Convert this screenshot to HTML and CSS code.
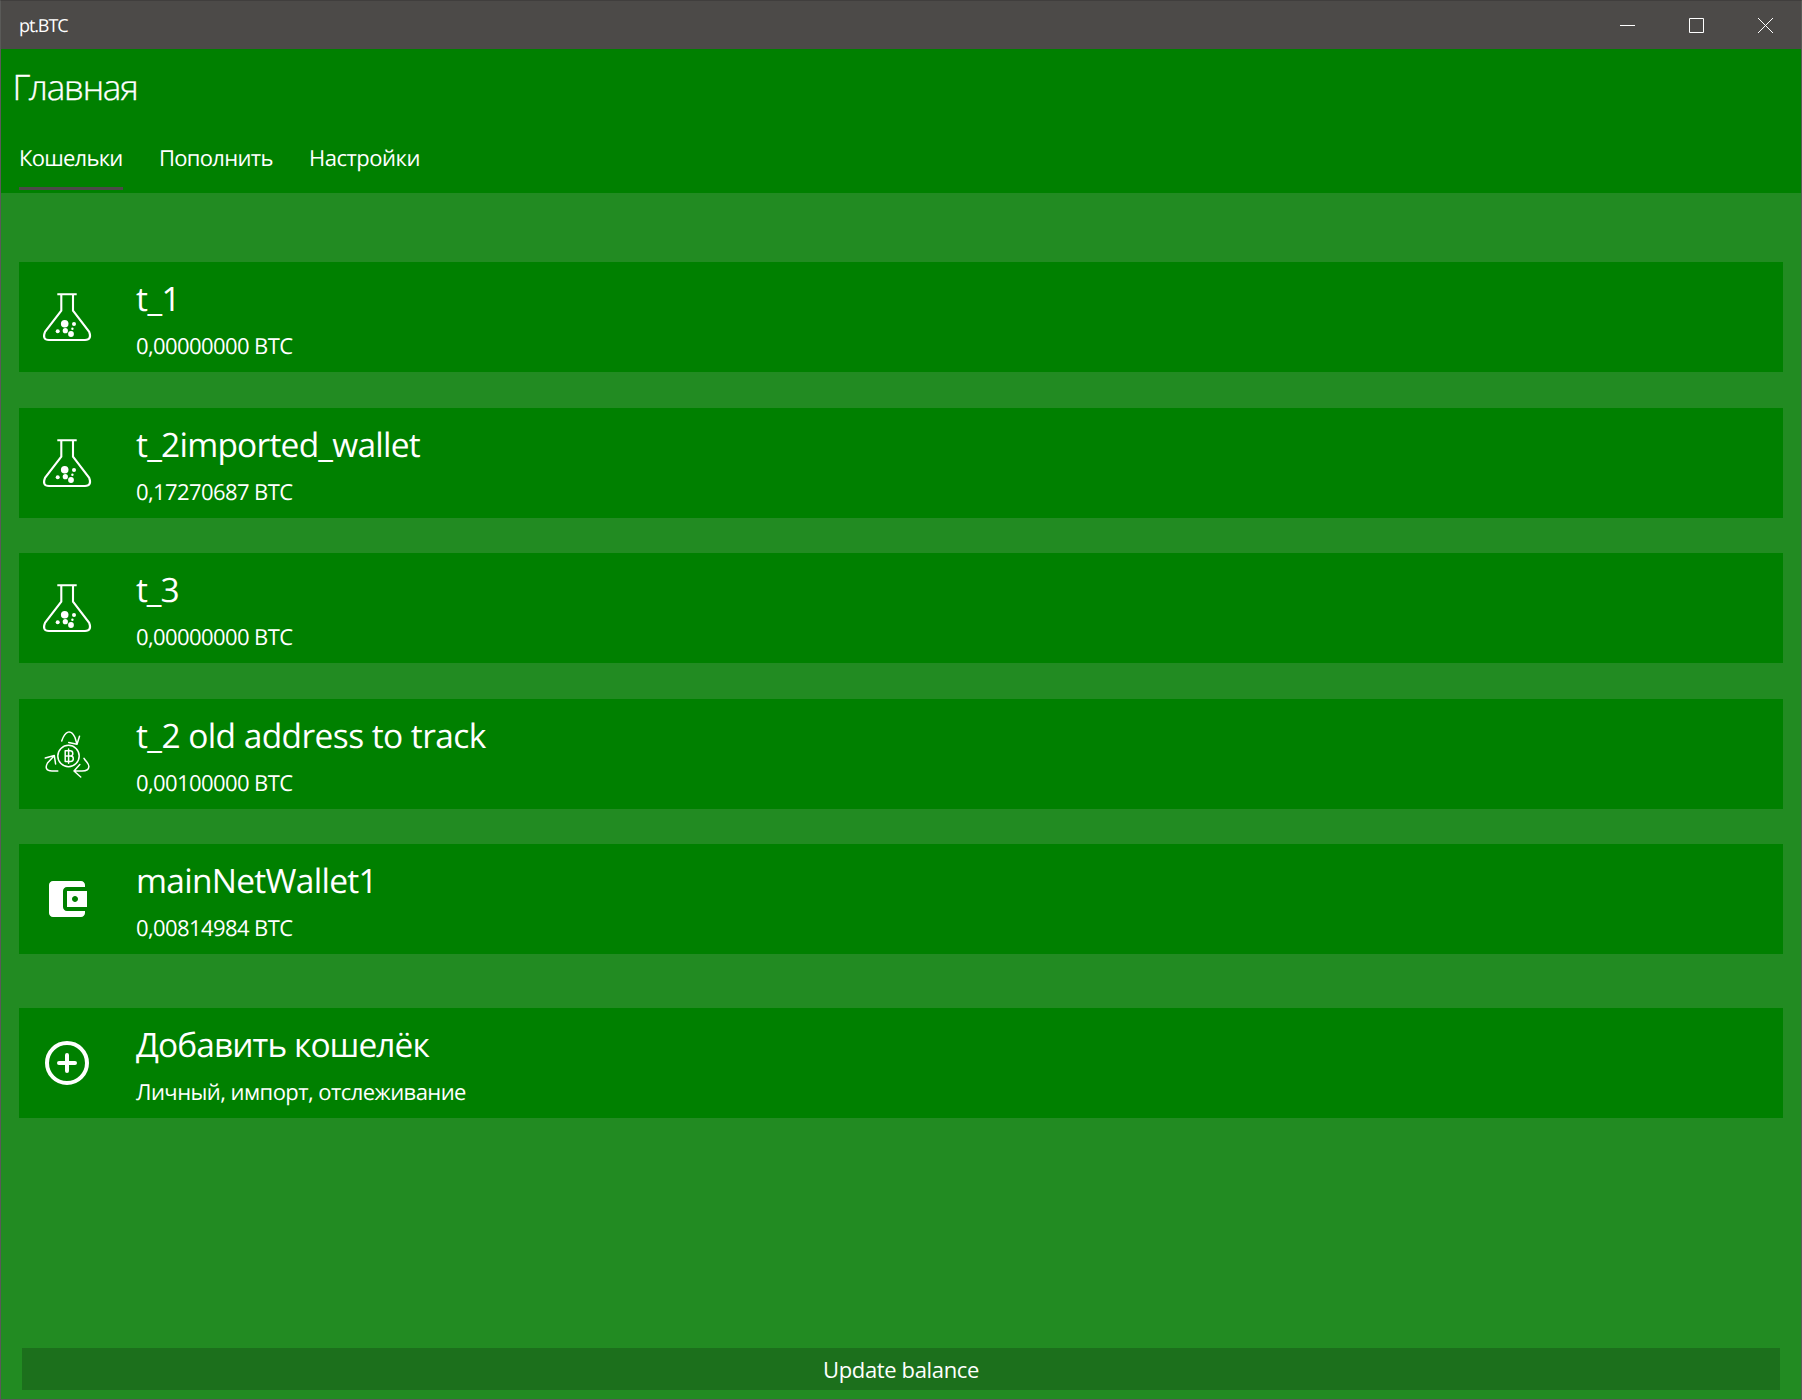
FILE: index.html
```html
<!DOCTYPE html>
<html lang="ru">
<head>
<meta charset="utf-8">
<title>pt.BTC</title>
<link rel="stylesheet" href="styles.css">
</head>
<body>
<svg width="0" height="0" class="defs">
  <symbol id="flask" viewBox="0 0 60 60">
    <path d="M20.3 7.2h19.4M24.3 7.5v16.2L8 44.8Q4.8 52.8 12 53h36q7.2-.2 4.2-8.2L36 23.7V7.5" fill="none" stroke="#fff" stroke-width="2.1"/>
    <g fill="#fff"><circle cx="27.7" cy="36.7" r="3.8"/><circle cx="37" cy="37" r="2"/><circle cx="35.4" cy="41.7" r="1.2"/><circle cx="28.3" cy="43.7" r="2.6"/><circle cx="34" cy="47" r="2.9"/><circle cx="20.7" cy="44.3" r="2"/></g>
  </symbol>
</svg>
<div class="window">
  <header class="titlebar">
    <span class="app-name">pt.BTC</span>
    <div class="controls">
      <svg class="control" viewBox="0 0 69 48"><path d="M27 24.5h15"/></svg>
      <svg class="control" viewBox="0 0 69 48"><path d="M27.500 17.500h14v14h-14z"/></svg>
      <svg class="control" viewBox="0 0 69 48"><path d="M27 17l15 15M42 17L27 32"/></svg>
    </div>
  </header>
  <div class="top">
    <h1 class="title">Главная</h1>
    <nav class="tabs">
      <a class="tab active">Кошельки</a>
      <a class="tab refill">Пополнить</a>
      <a class="tab settings">Настройки</a>
    </nav>
  </div>
  <main class="content">
    <div class="cards">
      <section class="card">
        <svg class="icon"><use href="#flask"/></svg>
        <div class="info"><div class="name short">t_1</div><div class="detail">0,00000000 BTC</div></div>
      </section>
      <section class="card">
        <svg class="icon"><use href="#flask"/></svg>
        <div class="info"><div class="name imported">t_2imported_wallet</div><div class="detail">0,17270687 BTC</div></div>
      </section>
      <section class="card">
        <svg class="icon"><use href="#flask"/></svg>
        <div class="info"><div class="name third">t_3</div><div class="detail">0,00000000 BTC</div></div>
      </section>
      <section class="card">
        <svg class="icon" viewBox="0 0 60 60" fill="none" stroke="#fff" stroke-width="1.5" stroke-linecap="round" stroke-linejoin="round">
          <circle cx="31.5" cy="32" r="10.7"/>
          <path d="M28.2 26.800h5a2.600 2.600 0 0 1 0 5.200h-5M33.200 32h.4a2.700 2.700 0 0 1 0 5.400h-5.400V26.800M31.600 25v14.200"/>
          <path d="M24.7 17C28 7 34 4.5 38 13.5l2 6.800M31.700 18.400l8.300 1.900 2.500-8"/>
          <path d="M20.8 47H15c-6 0-7-3.500-4.500-8l6.700-7.300M8.300 34l9-2.500 1.300 8.500"/>
          <path d="M47 34.300c2.500 4 5 5.500 4.900 8.200C51.800 46 48 47 45 47h-8M42.800 40.500L37 47l6.700 6"/>
        </svg>
        <div class="info"><div class="name track">t_2 old address to track</div><div class="detail">0,00100000 BTC</div></div>
      </section>
      <section class="card">
        <svg class="icon" viewBox="-3 -3 30 30" fill="#fff"><path d="M21 18v1c0 1.100-.9 2-2 2H5c-1.110 0-2-.9-2-2V5c0-1.100.89-2 2-2h14c1.100 0 2 .9 2 2v1h-9c-1.110 0-2 .9-2 2v8c0 1.100.89 2 2 2h9zm-9-2h10V8H12v8zm4-2.500c-.83 0-1.500-.67-1.500-1.500s.67-1.500 1.500-1.500 1.500.67 1.500 1.500-.67 1.500-1.500 1.500z"/></svg>
        <div class="info"><div class="name main-net">mainNetWallet1</div><div class="detail">0,00814984 BTC</div></div>
      </section>
    </div>
    <section class="card add">
      <svg class="icon" viewBox="0 0 60 60" fill="none" stroke="#fff" stroke-width="4" stroke-linecap="round"><circle cx="30" cy="30" r="20"/><path d="M22 30h16M30 22v16"/></svg>
      <div class="info"><div class="name create">Добавить кошелёк</div><div class="detail kinds">Личный, импорт, отслеживание</div></div>
    </section>
    <button class="update">Update balance</button>
  </main>
</div>
</body>
</html>
```
FILE: styles.css
```css
* { box-sizing: border-box; }
body {
  margin: 0;
  font-family: "Open Sans", "Noto Sans", sans-serif;
  color: #fff;
  text-rendering: geometricPrecision;
}
.defs { display: none; }
.window {
  display: flex;
  flex-direction: column;
  height: 1400px;
  border: 1px solid #5a5a58;
  border-top-color: #403e3d;
  background: #228b22;
}
.titlebar {
  display: flex;
  justify-content: space-between;
  height: 48px;
  padding: 0 1px 0 18px;
  background: #4c4a48;
}
.app-name { font-size: 18px; line-height: 50px; letter-spacing: -1.1px; }
.controls { display: flex; }
.control { width: 69px; height: 48px; fill: none; stroke: #fff; stroke-width: 1; }
.top { height: 144px; background: #008000; }
.title {
  margin: 0;
  padding: 15px 0 0 11.5px;
  font-size: 35px;
  font-weight: 300;
  line-height: 47px;
  letter-spacing: -1.2px;
  -webkit-text-stroke: 0.35px #fff;
}
.tabs { display: flex; padding: 27px 0 0 18px; }
.tab {
  height: 52px;
  font-size: 22px;
  line-height: 40px;
  letter-spacing: -0.75px;
  white-space: nowrap;
}
.active { width: 104px; border-bottom: 3px solid #4c4a48; }
.refill { width: 150px; margin-left: 36px; letter-spacing: -0.7px; }
.settings { letter-spacing: -0.5px; }
.content {
  display: flex;
  flex: 1;
  flex-direction: column;
  padding: 69.1px 18px 9px;
}
.cards { display: flex; flex-direction: column; gap: 35.5px; }
.card {
  display: flex;
  height: 110px;
  padding: 13px 0 0 18px;
  background: #008000;
}
.add { margin-top: 53.9px; }
.icon { width: 60px; height: 60px; margin-top: 12px; }
.info { margin-left: 39px; }
.name { font-size: 33.5px; line-height: 46px; white-space: nowrap; }
.short { letter-spacing: -0.5px; }
.imported { letter-spacing: -0.77px; }
.third { letter-spacing: -1.1px; }
.track { letter-spacing: -0.58px; }
.main-net { letter-spacing: -0.72px; }
.create { letter-spacing: -0.93px; }
.detail { margin-top: 10px; font-size: 22px; line-height: 30px; letter-spacing: -0.6px; white-space: nowrap; }
.kinds { letter-spacing: -0.56px; }
.update {
  height: 42px;
  margin: auto 3px 0;
  padding: 0;
  border: 0;
  background: #1c701c;
  color: #fff;
  font: 22px "Open Sans", "Noto Sans", sans-serif;
  letter-spacing: -0.36px;
}
```
